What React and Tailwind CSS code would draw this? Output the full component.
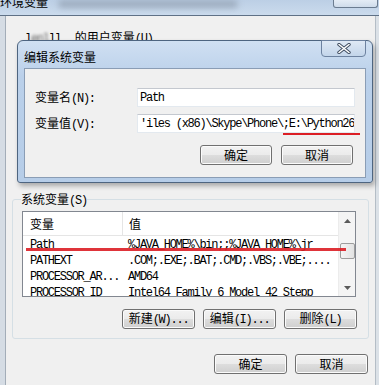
import React from 'react';

// mixed label: CJK part + half-width latin part (SimSun-like look)
const Lb = ({ c, a, className = '' }) => (
  <span className={'inline-flex items-baseline whitespace-nowrap text-black leading-[14px] ' + className}>
    {c && <span className="font-['Noto_Sans_CJK_SC',sans-serif] text-[12px]">{c}</span>}
    {a && <span className="font-['Liberation_Mono',monospace] text-[12px] tracking-[-1.25px]">{a}</span>}
  </span>
);

const Btn = ({ c, a, w = 'w-[73px]' }) => (
  <div
    className={
      'flex items-center justify-center h-[20px] rounded-[3px] border border-[#707070] shadow-[inset_0_0_0_1px_#fbfbfb] bg-[linear-gradient(to_bottom,#f2f2f2_0%,#ebebeb_50%,#dddddd_51%,#cfcfcf_100%)] ' +
      w
    }
  >
    <Lb c={c} a={a} />
  </div>
);

const rows = [
  ['Path', '%JAVA_HOME%\\bin;;%JAVA_HOME%\\jr'],
  ['PATHEXT', '.COM;.EXE;.BAT;.CMD;.VBS;.VBE;....'],
  ['PROCESSOR_AR...', 'AMD64'],
  ['PROCESSOR_ID', 'Intel64 Family 6 Model 42 Stepp'],
];

const Arrow = ({ down }) => (
  <svg width="7" height="4" viewBox="0 0 7 4">
    <path d={down ? 'M0 0h7L3.5 4z' : 'M0 4h7L3.5 0z'} fill="#5a5a5a" />
  </svg>
);

const VarList = () => (
  <div className="relative w-[334px] h-[86px] mt-[5px] border border-[#828790] bg-white flex overflow-hidden">
    <div className="flex-1 flex flex-col">
      <div className="h-[24px] flex border-b border-[#e5e5e5] shrink-0">
        <div className="w-[100px] pl-[7px] flex items-center border-r border-[#e5e5e5]">
          <Lb c="变量" />
        </div>
        <div className="pl-[6px] flex items-center">
          <Lb c="值" />
        </div>
      </div>
      {rows.map(([name, val]) => (
        <div key={name} className="h-[16px] flex items-center shrink-0">
          <div className="w-[100px] pl-[7px]">
            <Lb a={name} />
          </div>
          <div className="pl-[5px] whitespace-nowrap">
            <Lb a={val} />
          </div>
        </div>
      ))}
    </div>
    <div className="w-[17px] flex flex-col items-center bg-[#f4f4f4] border-l border-[#ececec]">
      <div className="h-[17px] flex items-center justify-center">
        <Arrow />
      </div>
      <div className="mt-[14px] w-[15px] h-[16px] rounded-[2px] border border-[#9d9d9d] bg-[linear-gradient(to_right,#f5f5f5,#e2e2e2)]" />
      <div className="mt-auto h-[17px] flex items-center justify-center">
        <Arrow down />
      </div>
    </div>
    {/* red annotation */}
    <div className="absolute left-[3px] top-[36px] w-[320px] h-[3px] bg-[#dc1e25] opacity-90" />
  </div>
);

const Input = ({ text }) => (
  <div className="w-[218px] h-[19px] bg-white border border-[#e3e9ef] border-t-[#c4c8cf] flex items-center pl-[2px] overflow-hidden whitespace-nowrap">
    <Lb a={text} />
  </div>
);

const EditDialog = () => (
  <div className="absolute left-[17px] top-[40px] w-[356px] h-[143px] rounded-t-[6px] rounded-b-[3px] border border-[#4e6580] bg-[linear-gradient(to_bottom,#d0e0f2,#bad0ea_25%,#b6cde8)] shadow-[2px_3px_5px_rgba(0,0,0,0.3)] flex flex-col">
    <div className="h-[27px] flex justify-between items-start pl-[6px] pr-[6px] shrink-0">
      <Lb c="编辑系统变量" className="mt-[9px]" />
      <div className="-mt-px w-[45px] h-[17px] rounded-b-[4px] border border-[#6d82a0] bg-[linear-gradient(to_bottom,#dfe9f5,#c3d5ea)] flex items-center justify-center">
        <svg width="14" height="11" viewBox="0 0 14 11">
          <path d="M2 1.5l10 8M12 1.5l-10 8" stroke="#3c4a5e" strokeWidth="3.4" strokeLinecap="round" />
          <path d="M2 1.5l10 8M12 1.5l-10 8" stroke="#ffffff" strokeWidth="1.6" strokeLinecap="round" />
        </svg>
      </div>
    </div>
    <div className="mx-[6px] h-[110px] bg-[#f0f0f0] border border-[#8a9db5] flex flex-col shrink-0">
      <div className="flex items-center mt-[19px] pl-[10px]">
        <div className="w-[102px] flex">
          <Lb c="变量名" a="(N):" />
        </div>
        <Input text="Path" />
      </div>
      <div className="flex items-center mt-[7px] pl-[10px]">
        <div className="w-[102px] flex">
          <Lb c="变量值" a="(V):" />
        </div>
        <Input text="'iles (x86)\Skype\Phone\;E:\Python26" />
      </div>
      <div className="flex justify-end gap-[9px] mt-[12px] pr-[12px]">
        <Btn c="确定" w="w-[72px]" />
        <Btn c="取消" w="w-[72px]" />
      </div>
    </div>
    {/* red annotation under E:\Python26 */}
    <div className="absolute left-[265px] top-[92px] w-[77px] h-[2px] bg-[#dc1e25]" />
  </div>
);

export default function App() {
  return (
    <div className="relative w-[379px] h-[385px] overflow-hidden bg-[#f0f0f0] text-[12px] leading-[14px] font-['Noto_Sans_CJK_SC',sans-serif]">
      {/* outer window title bar */}
      <div className="h-[16px] flex items-start justify-between border-b border-[#5f7186] bg-[linear-gradient(to_bottom,#bccfe5,#cbdbed)]">
        <div className="flex items-start">
          <Lb c="环境变量" className="-mt-[5px]" />
          <div className="ml-[10px] w-[180px] h-[8px] rounded-full bg-[#8e9cad] blur-[3px] opacity-70" />
        </div>
        <div className="mr-[1px] w-[45px] h-[8px] rounded-b-[3px] border border-t-0 border-[#6b7c90] bg-[linear-gradient(to_bottom,#e4ecf5,#cfdceb)]" />
      </div>

      <div className="flex h-[369px]">
        <div className="w-[6px] bg-[#d5dce4] border-r border-[#a3adb8]" />
        <div className="flex-1 flex flex-col">
          <div className="mt-[14px] ml-[19px] h-[14px] flex items-baseline">
            <Lb a="l" />
            <span className="flex blur-[1.5px] opacity-60">
              <Lb a="enl" />
            </span>
            <Lb a="ll" />
            <Lb c="的用户变量" a="(U)" className="ml-[14px]" />
          </div>

          <fieldset className="mt-[148px] mx-[6px] px-[9px] pb-[9px] border border-[#d5dfe5] rounded-[3px]">
            <legend className="-ml-[1px] flex h-[14px]">
              <Lb c="系统变量" a="(S)" />
            </legend>
            <VarList />
            <div className="flex justify-end gap-[8px] mt-[12px] pr-[2px]">
              <Btn c="新建" a="(W)..." />
              <Btn c="编辑" a="(I)..." />
              <Btn c="删除" a="(L)" />
            </div>
          </fieldset>

          <div className="flex justify-end gap-[8px] mt-[15px] pr-[7px]">
            <Btn c="确定" />
            <Btn c="取消" />
          </div>
        </div>
        <div className="w-[4px] bg-[#dbe1e7] border-l border-[#b4bdc6]" />
      </div>

      <EditDialog />
    </div>
  );
}
